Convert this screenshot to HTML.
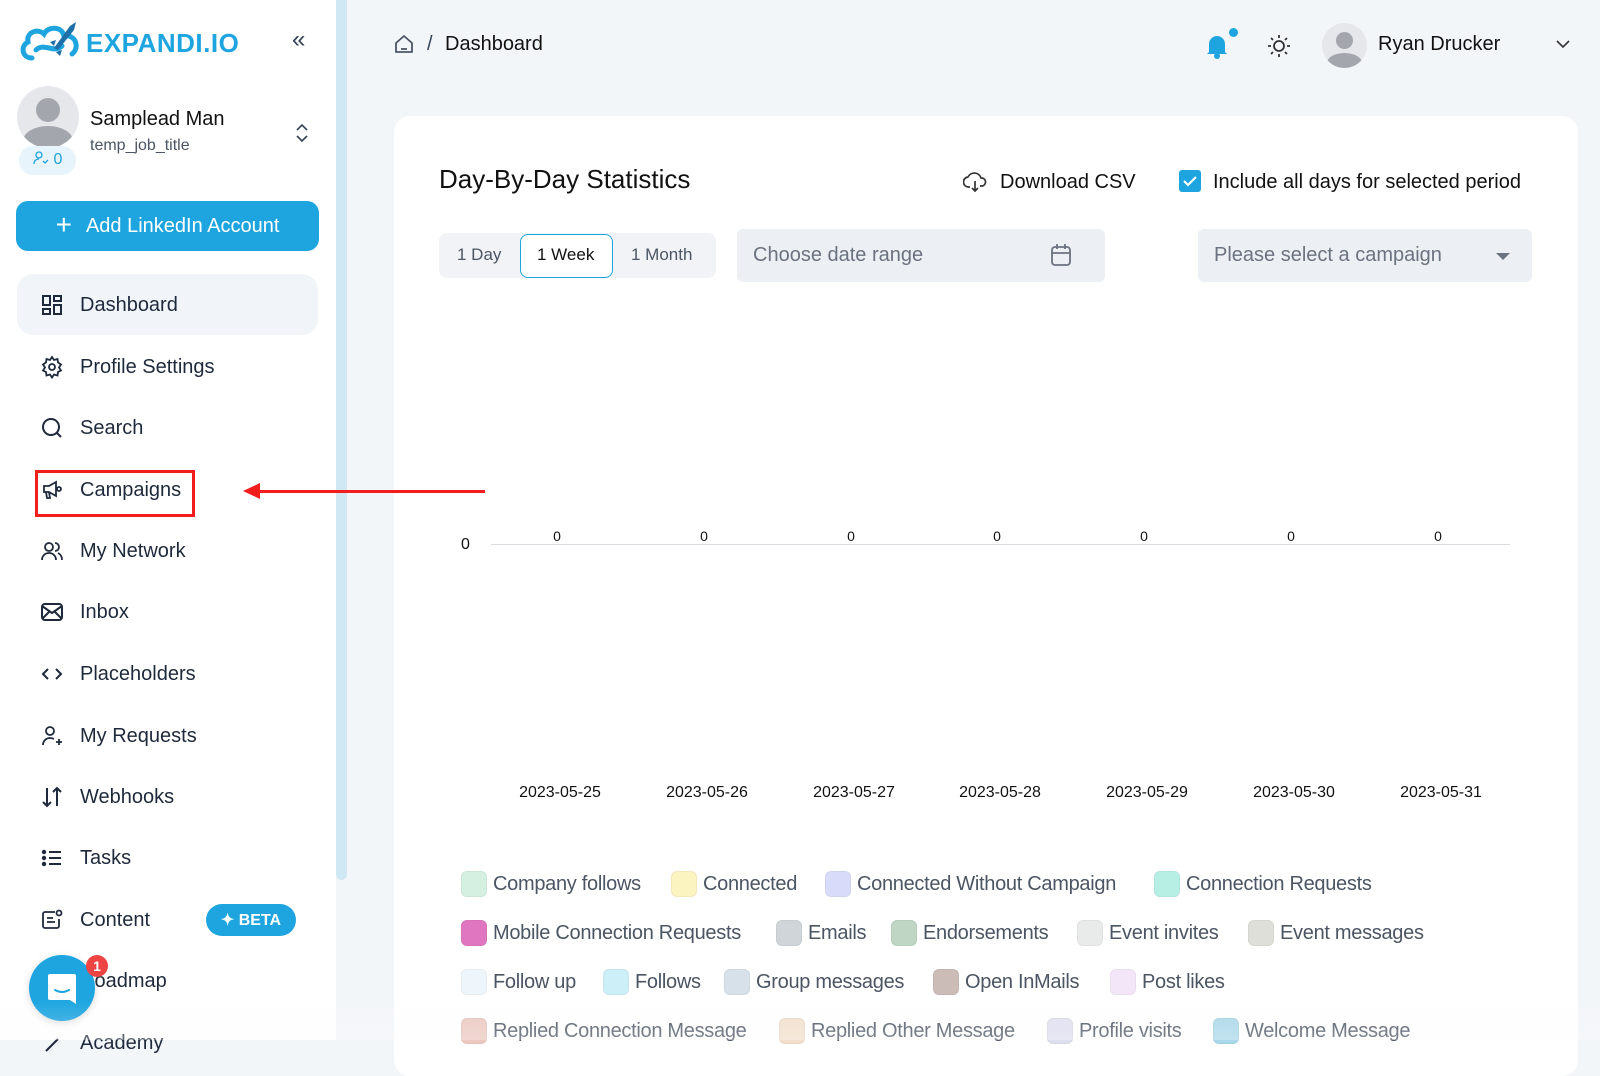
<!DOCTYPE html>
<html><head><meta charset="utf-8">
<style>
*{box-sizing:border-box;margin:0;padding:0}
body{width:1600px;height:1040px;overflow:hidden;background:#f3f6f9;font-family:"Liberation Sans",sans-serif;color:#1e293b;position:relative}
.a{position:absolute}
.side{left:0;top:0;width:336px;height:1040px;background:#fff}
.scroll{left:336px;top:0;width:11px;height:880px;background:#cfe8f4;border-radius:0 0 6px 6px}
.nav{left:40px;display:flex;align-items:center;font-size:20px;color:#1e293b;height:30px}
.nav svg{width:24px;height:24px;margin-right:16px;flex:none}
.card{left:394px;top:116px;width:1184px;height:960px;background:#fff;border-radius:16px}
.leg{position:absolute;display:flex;align-items:center;font-size:20px;color:#4b5563;white-space:nowrap;letter-spacing:-0.3px}
.leg i{display:inline-block;width:26px;height:26px;border-radius:6px;margin-right:6px;border:1px solid rgba(0,0,0,0.04)}
.v{position:absolute;font-size:14px;color:#111;width:40px;text-align:center}
.d{position:absolute;font-size:16px;color:#111;width:120px;text-align:center}
</style></head><body>
<div class="a side"></div>
<div class="a scroll"></div>

<!-- logo -->
<svg class="a" style="left:18px;top:18px" width="68" height="48" viewBox="0 0 68 48">
<path d="M14 40 C4 40 2 28 10 24 C8 14 20 10 26 16 C30 8 44 8 46 18 C58 16 62 30 54 36" fill="none" stroke="#1ea5e0" stroke-width="5" stroke-linecap="round"/>
<path d="M18 32 C26 24 36 36 44 28" fill="none" stroke="#1ea5e0" stroke-width="5" stroke-linecap="round"/>
<path d="M36 30 L52 8 L58 4 L56 12 L40 32 Z" fill="#1e6fa8"/>
<path d="M38 22 L32 24 L36 28 Z M44 32 L42 38 L38 34 Z" fill="#1e6fa8"/>
</svg>
<div class="a" style="left:86px;top:28px;font-size:26px;font-weight:700;color:#1ea5e0;letter-spacing:0.5px">EXPANDI.IO</div>
<div class="a" style="left:292px;top:26px;font-size:24px;color:#334155">«</div>

<!-- profile -->
<div class="a" style="left:17px;top:86px;width:62px;height:62px;border-radius:50%;background:#e5e7eb;overflow:hidden">
<div class="a" style="left:19px;top:12px;width:24px;height:24px;border-radius:50%;background:#a3a7ad"></div>
<div class="a" style="left:6px;top:40px;width:50px;height:30px;border-radius:50% 50% 0 0;background:#a3a7ad"></div>
</div>
<div class="a" style="left:19px;top:146px;width:57px;height:29px;border-radius:14px;background:#e8f4fb;color:#1ea5e0;font-size:16px;padding:5px 0 0 14px">
<svg width="16" height="14" viewBox="0 0 16 14" style="vertical-align:-1px"><circle cx="6" cy="4" r="3" fill="none" stroke="#1ea5e0" stroke-width="1.3"/><path d="M1 13c0-3 2-5 5-5" fill="none" stroke="#1ea5e0" stroke-width="1.3"/><path d="M10 10l2 2 3-3" fill="none" stroke="#1ea5e0" stroke-width="1.3"/></svg> 0</div>
<div class="a" style="left:90px;top:108px;font-size:20px;color:#111">Samplead Man</div>
<div class="a" style="left:90px;top:137px;font-size:16px;color:#4b5563">temp_job_title</div>
<svg class="a" style="left:295px;top:123px" width="14" height="20" viewBox="0 0 14 20"><path d="M2 7l5-5 5 5M2 13l5 5 5-5" fill="none" stroke="#334155" stroke-width="1.6"/></svg>

<div class="a" style="left:16px;top:201px;width:303px;height:50px;border-radius:12px;background:#1ea5e0;color:#fff;font-size:20px;display:flex;align-items:center;justify-content:center"><span style="font-size:28px;font-weight:300;margin-right:14px;margin-top:-3px">+</span>Add LinkedIn Account</div>

<div class="a" style="left:17px;top:274px;width:301px;height:61px;border-radius:16px;background:#f1f5f9"></div>
<div class="a nav" style="top:290px"><svg viewBox="0 0 24 24" fill="none" stroke="#1e293b" stroke-width="2"><rect x="3" y="3" width="7" height="9"/><rect x="14" y="3" width="7" height="5"/><rect x="14" y="12" width="7" height="9"/><rect x="3" y="16" width="7" height="5"/></svg>Dashboard</div>
<div class="a nav" style="top:352px"><svg viewBox="0 0 24 24" fill="none" stroke="#1e293b" stroke-width="1.8"><circle cx="12" cy="12" r="3"/><path d="M12 2l2 3 3.5-1 .5 3.5 3 2-2 3 2 3-3 1.5-.5 3.5-3.5-1-2 3-2-3-3.5 1-.5-3.5-3-1.5 2-3-2-3 3-2 .5-3.5 3.5 1z"/></svg>Profile Settings</div>
<div class="a nav" style="top:413px"><svg viewBox="0 0 24 24" fill="none" stroke="#1e293b" stroke-width="2"><circle cx="11" cy="11" r="8"/><path d="M17 17l4 4"/></svg>Search</div>
<div class="a nav" style="top:475px"><svg viewBox="0 0 24 24" fill="none" stroke="#1e293b" stroke-width="1.8"><path d="M4 8h5l7-4v14l-7-4H4z"/><path d="M6 14l1 6h3l-1-6"/><circle cx="19" cy="11" r="2"/></svg>Campaigns</div>
<div class="a" style="left:35px;top:470px;width:160px;height:47px;border:3px solid #f21d1d"></div>
<div class="a nav" style="top:536px"><svg viewBox="0 0 24 24" fill="none" stroke="#1e293b" stroke-width="1.8"><circle cx="9" cy="8" r="4"/><path d="M2 21c0-4 3-7 7-7s7 3 7 7"/><path d="M15 4a4 4 0 010 8M18 14c2 1 4 3 4 7"/></svg>My Network</div>
<div class="a nav" style="top:597px"><svg viewBox="0 0 24 24" fill="none" stroke="#1e293b" stroke-width="2"><rect x="2" y="4" width="20" height="16" rx="3"/><path d="M2 6l10 7 10-7M2 19l7-7M22 19l-7-7"/></svg>Inbox</div>
<div class="a nav" style="top:659px"><svg viewBox="0 0 24 24" fill="none" stroke="#1e293b" stroke-width="2"><path d="M8 7l-5 5 5 5M16 7l5 5-5 5"/></svg>Placeholders</div>
<div class="a nav" style="top:721px"><svg viewBox="0 0 24 24" fill="none" stroke="#1e293b" stroke-width="1.8"><circle cx="10" cy="7" r="4"/><path d="M3 21c0-4 3-7 7-7 2 0 3 .5 4 1M19 15v6M16 18h6"/></svg>My Requests</div>
<div class="a nav" style="top:782px"><svg viewBox="0 0 24 24" fill="none" stroke="#1e293b" stroke-width="2"><path d="M7 3v18M3 17l4 4 4-4M17 21V3M13 7l4-4 4 4"/></svg>Webhooks</div>
<div class="a nav" style="top:843px"><svg viewBox="0 0 24 24" fill="none" stroke="#1e293b" stroke-width="2"><path d="M9 6h12M9 12h12M9 18h12"/><circle cx="4" cy="6" r="1.2" fill="#1e293b"/><circle cx="4" cy="12" r="1.2" fill="#1e293b"/><circle cx="4" cy="18" r="1.2" fill="#1e293b"/></svg>Tasks</div>
<div class="a nav" style="top:905px"><svg viewBox="0 0 24 24" fill="none" stroke="#1e293b" stroke-width="1.8"><path d="M15 4H5a2 2 0 00-2 2v12a2 2 0 002 2h12a2 2 0 002-2v-7"/><circle cx="19" cy="5" r="2.5"/><path d="M7 10h6M7 14h8"/></svg>Content</div>
<div class="a" style="left:206px;top:904px;width:90px;height:32px;border-radius:16px;background:#1ea5e0;color:#fff;font-size:16px;font-weight:700;display:flex;align-items:center;justify-content:center">✦&nbsp;BETA</div>
<div class="a nav" style="top:966px"><svg viewBox="0 0 24 24"></svg>Roadmap</div>
<div class="a nav" style="top:1028px"><svg viewBox="0 0 24 24" fill="none" stroke="#1e293b" stroke-width="2"><path d="M6 20l12-12"/></svg>Academy</div>
<div class="a" style="left:29px;top:955px;width:66px;height:66px;border-radius:50%;background:#1ea5e0;box-shadow:0 2px 8px rgba(0,0,0,.15)"></div>
<svg class="a" style="left:46px;top:972px" width="32" height="34" viewBox="0 0 32 34"><path d="M4 2h24a2 2 0 012 2v28l-6-4H4a2 2 0 01-2-2V4a2 2 0 012-2z" fill="#fff"/><path d="M9 18q7 4 14 0" fill="none" stroke="#1ea5e0" stroke-width="2" stroke-linecap="round"/></svg>
<div class="a" style="left:86px;top:955px;width:22px;height:22px;border-radius:50%;background:#ef4444;color:#fff;font-size:14px;font-weight:700;text-align:center;line-height:22px">1</div>

<!-- header -->
<svg class="a" style="left:394px;top:34px" width="20" height="20" viewBox="0 0 20 20"><path d="M2 9l8-7 8 7v9H2z" fill="none" stroke="#4b5563" stroke-width="1.8" stroke-linejoin="round"/><path d="M7 15h6" stroke="#4b5563" stroke-width="1.8"/></svg>
<div class="a" style="left:427px;top:33px;font-size:20px;color:#334155">/</div>
<div class="a" style="left:445px;top:33px;font-size:20px;color:#111">Dashboard</div>
<svg class="a" style="left:1205px;top:33px" width="24" height="26" viewBox="0 0 24 26"><path d="M4 19V11a8 8 0 0116 0v8l2 2H2z" fill="#1ea5e0"/><circle cx="12" cy="23" r="3" fill="#1ea5e0"/></svg>
<div class="a" style="left:1229px;top:28px;width:9px;height:9px;border-radius:50%;background:#1ea5e0"></div>
<svg class="a" style="left:1266px;top:33px" width="26" height="26" viewBox="0 0 26 26" fill="none" stroke="#333" stroke-width="1.8"><circle cx="13" cy="13" r="5"/><path d="M13 2v3M13 21v3M2 13h3M21 13h3M5 5l2 2M19 19l2 2M5 21l2-2M19 7l2-2"/></svg>
<div class="a" style="left:1322px;top:23px;width:45px;height:45px;border-radius:50%;background:#e5e7eb;overflow:hidden">
<div class="a" style="left:14px;top:9px;width:17px;height:17px;border-radius:50%;background:#a3a7ad"></div>
<div class="a" style="left:5px;top:30px;width:35px;height:20px;border-radius:50% 50% 0 0;background:#a3a7ad"></div></div>
<div class="a" style="left:1378px;top:33px;font-size:20px;color:#111">Ryan Drucker</div>
<svg class="a" style="left:1555px;top:38px" width="16" height="12" viewBox="0 0 16 12"><path d="M2 3l6 6 6-6" fill="none" stroke="#333" stroke-width="1.6"/></svg>

<!-- card -->
<div class="a card"></div>
<div class="a" style="left:256px;top:490px;width:229px;height:3px;background:#f21d1d"></div>
<div class="a" style="left:243px;top:483px;width:0;height:0;border-top:8px solid transparent;border-bottom:8px solid transparent;border-right:17px solid #f21d1d"></div>
<div class="a" style="left:439px;top:164px;font-size:26px;color:#111">Day-By-Day Statistics</div>
<svg class="a" style="left:963px;top:171px" width="24" height="22" viewBox="0 0 24 22" fill="none" stroke="#333" stroke-width="1.7"><path d="M7 16H6a5 5 0 01-1-10 7 7 0 0113 1 4 4 0 011 8h-2"/><path d="M12 10v10M9 17l3 3 3-3"/></svg>
<div class="a" style="left:1000px;top:171px;font-size:20px;color:#111">Download CSV</div>
<div class="a" style="left:1179px;top:170px;width:22px;height:22px;border-radius:3px;background:#1ea5e0"></div>
<svg class="a" style="left:1179px;top:170px" width="22" height="22" viewBox="0 0 22 22"><path d="M5 11l4 4 8-8" fill="none" stroke="#fff" stroke-width="2.2"/></svg>
<div class="a" style="left:1213px;top:171px;font-size:20px;color:#111">Include all days for selected period</div>

<div class="a" style="left:439px;top:233px;width:277px;height:45px;border-radius:8px;background:#f1f3f6"></div>
<div class="a" style="left:457px;top:245px;font-size:17px;color:#4b5563">1 Day</div>
<div class="a" style="left:520px;top:234px;width:93px;height:44px;border-radius:8px;background:#fff;border:1.5px solid #1ea5e0"></div>
<div class="a" style="left:537px;top:245px;font-size:17px;color:#111">1 Week</div>
<div class="a" style="left:631px;top:245px;font-size:17px;color:#4b5563">1 Month</div>

<div class="a" style="left:737px;top:229px;width:368px;height:53px;border-radius:6px;background:#eceff3"></div>
<div class="a" style="left:753px;top:244px;font-size:20px;color:#6b7280">Choose date range</div>
<svg class="a" style="left:1050px;top:243px" width="22" height="24" viewBox="0 0 22 24" fill="none" stroke="#6b7280" stroke-width="1.8"><rect x="2" y="4" width="18" height="18" rx="3"/><path d="M2 10h18M7 1v5M15 1v5"/></svg>

<div class="a" style="left:1198px;top:229px;width:334px;height:53px;border-radius:6px;background:#eceff3"></div>
<div class="a" style="left:1214px;top:244px;font-size:20px;color:#6b7280">Please select a campaign</div>
<div class="a" style="left:1496px;top:253px;width:0;height:0;border-left:7px solid transparent;border-right:7px solid transparent;border-top:7px solid #6b7280"></div>

<!-- chart -->
<div class="a" style="left:461px;top:536px;font-size:16px;color:#111">0</div>
<div class="a" style="left:491px;top:544px;width:1019px;height:1px;background:#d8dbe0"></div>
<div class="v" style="left:537px;top:528px">0</div>
<div class="v" style="left:684px;top:528px">0</div>
<div class="v" style="left:831px;top:528px">0</div>
<div class="v" style="left:977px;top:528px">0</div>
<div class="v" style="left:1124px;top:528px">0</div>
<div class="v" style="left:1271px;top:528px">0</div>
<div class="v" style="left:1418px;top:528px">0</div>
<div class="d" style="left:500px;top:784px">2023-05-25</div>
<div class="d" style="left:647px;top:784px">2023-05-26</div>
<div class="d" style="left:794px;top:784px">2023-05-27</div>
<div class="d" style="left:940px;top:784px">2023-05-28</div>
<div class="d" style="left:1087px;top:784px">2023-05-29</div>
<div class="d" style="left:1234px;top:784px">2023-05-30</div>
<div class="d" style="left:1381px;top:784px">2023-05-31</div>

<!-- legend -->
<div class="leg" style="left:461px;top:871px"><i style="background:#d5efe0"></i>Company follows</div>
<div class="leg" style="left:671px;top:871px"><i style="background:#fbf3c0"></i>Connected</div>
<div class="leg" style="left:825px;top:871px"><i style="background:#d8dcfa"></i>Connected Without Campaign</div>
<div class="leg" style="left:1154px;top:871px"><i style="background:#b8efe5"></i>Connection Requests</div>

<div class="leg" style="left:461px;top:920px"><i style="background:#e076c0"></i>Mobile Connection Requests</div>
<div class="leg" style="left:776px;top:920px"><i style="background:#cfd5d8"></i>Emails</div>
<div class="leg" style="left:891px;top:920px"><i style="background:#c0d6c4"></i>Endorsements</div>
<div class="leg" style="left:1077px;top:920px"><i style="background:#e9ebea"></i>Event invites</div>
<div class="leg" style="left:1248px;top:920px"><i style="background:#dedfd8"></i>Event messages</div>

<div class="leg" style="left:461px;top:969px"><i style="background:#eef6fb"></i>Follow up</div>
<div class="leg" style="left:603px;top:969px"><i style="background:#cdf0f8"></i>Follows</div>
<div class="leg" style="left:724px;top:969px"><i style="background:#d6e1ea"></i>Group messages</div>
<div class="leg" style="left:933px;top:969px"><i style="background:#cbbcb8"></i>Open InMails</div>
<div class="leg" style="left:1110px;top:969px"><i style="background:#f3e6f9"></i>Post likes</div>

<div class="leg" style="left:461px;top:1018px"><i style="background:#ecc8c0"></i>Replied Connection Message</div>
<div class="leg" style="left:779px;top:1018px"><i style="background:#f3dfcc"></i>Replied Other Message</div>
<div class="leg" style="left:1047px;top:1018px"><i style="background:#dfdff0"></i>Profile visits</div>
<div class="leg" style="left:1213px;top:1018px"><i style="background:#a9d8ea"></i>Welcome Message</div>

<div class="a" style="left:0;top:1000px;width:1600px;height:40px;background:linear-gradient(to bottom,rgba(250,250,250,0),rgba(250,250,250,0.3))"></div>
</body></html>
